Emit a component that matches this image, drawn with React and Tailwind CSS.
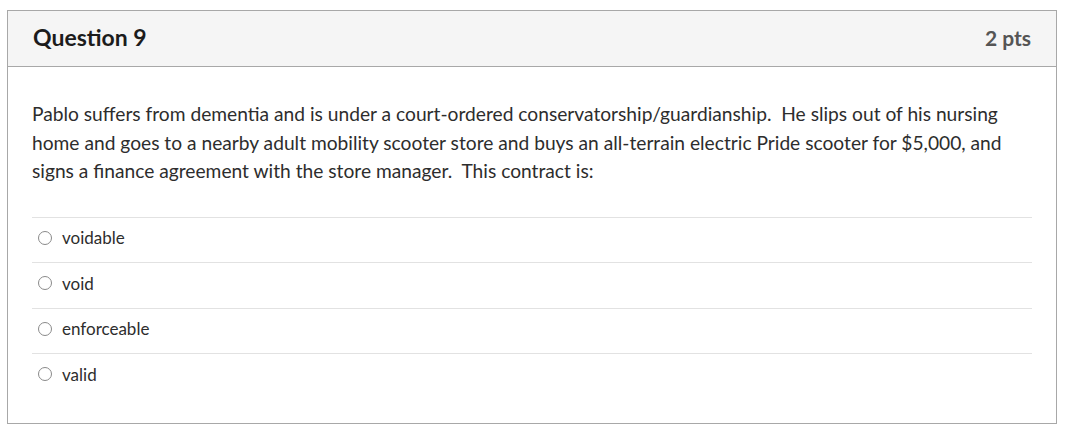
export default function App() {
  const answers = ['voidable', 'void', 'enforceable', 'valid'];

  return (
    <div className="min-h-screen bg-white pl-[7px] pt-[10px]" style={{ fontFamily: 'Lato, "Noto Sans", sans-serif' }}>
      <div className="w-[1050px] h-[414px] border border-[#a8a8a8] bg-white">
        {/* Header */}
        <div className="h-[56px] bg-[#f5f5f5] border-b border-[#a8a8a8] flex items-center justify-between px-[25px] pb-[3px]">
          <h2 className="text-[23px] font-bold text-[#1c1c1c] leading-none">Question 9</h2>
          <span className="text-[21px] font-bold text-[#555] leading-none">2 pts</span>
        </div>

        {/* Body */}
        <div className="px-[24px] pt-[33px]">
          <p className="text-[19.2px] leading-[28.5px] text-[#2d2d2d]">
            Pablo suffers from dementia and is under a court-ordered conservatorship/guardianship.&nbsp; He slips out of his nursing home and goes to a nearby adult mobility scooter store and buys an all-terrain electric Pride scooter for $5,000, and signs a finance agreement with the store manager.&nbsp; This contract is:
          </p>

          <div className="mt-[31px]">
            {answers.map((a) => (
              <label key={a} className="flex items-center h-[45.5px] border-t border-[#e2e2e2] pl-[6px] pb-[4px] cursor-pointer">
                <span className="w-[14px] h-[14px] rounded-full border border-[#8a8a8a] bg-white shrink-0" />
                <span className="ml-[10px] text-[17px] text-[#2d2d2d]">{a}</span>
              </label>
            ))}
          </div>
        </div>
      </div>
    </div>
  );
}
